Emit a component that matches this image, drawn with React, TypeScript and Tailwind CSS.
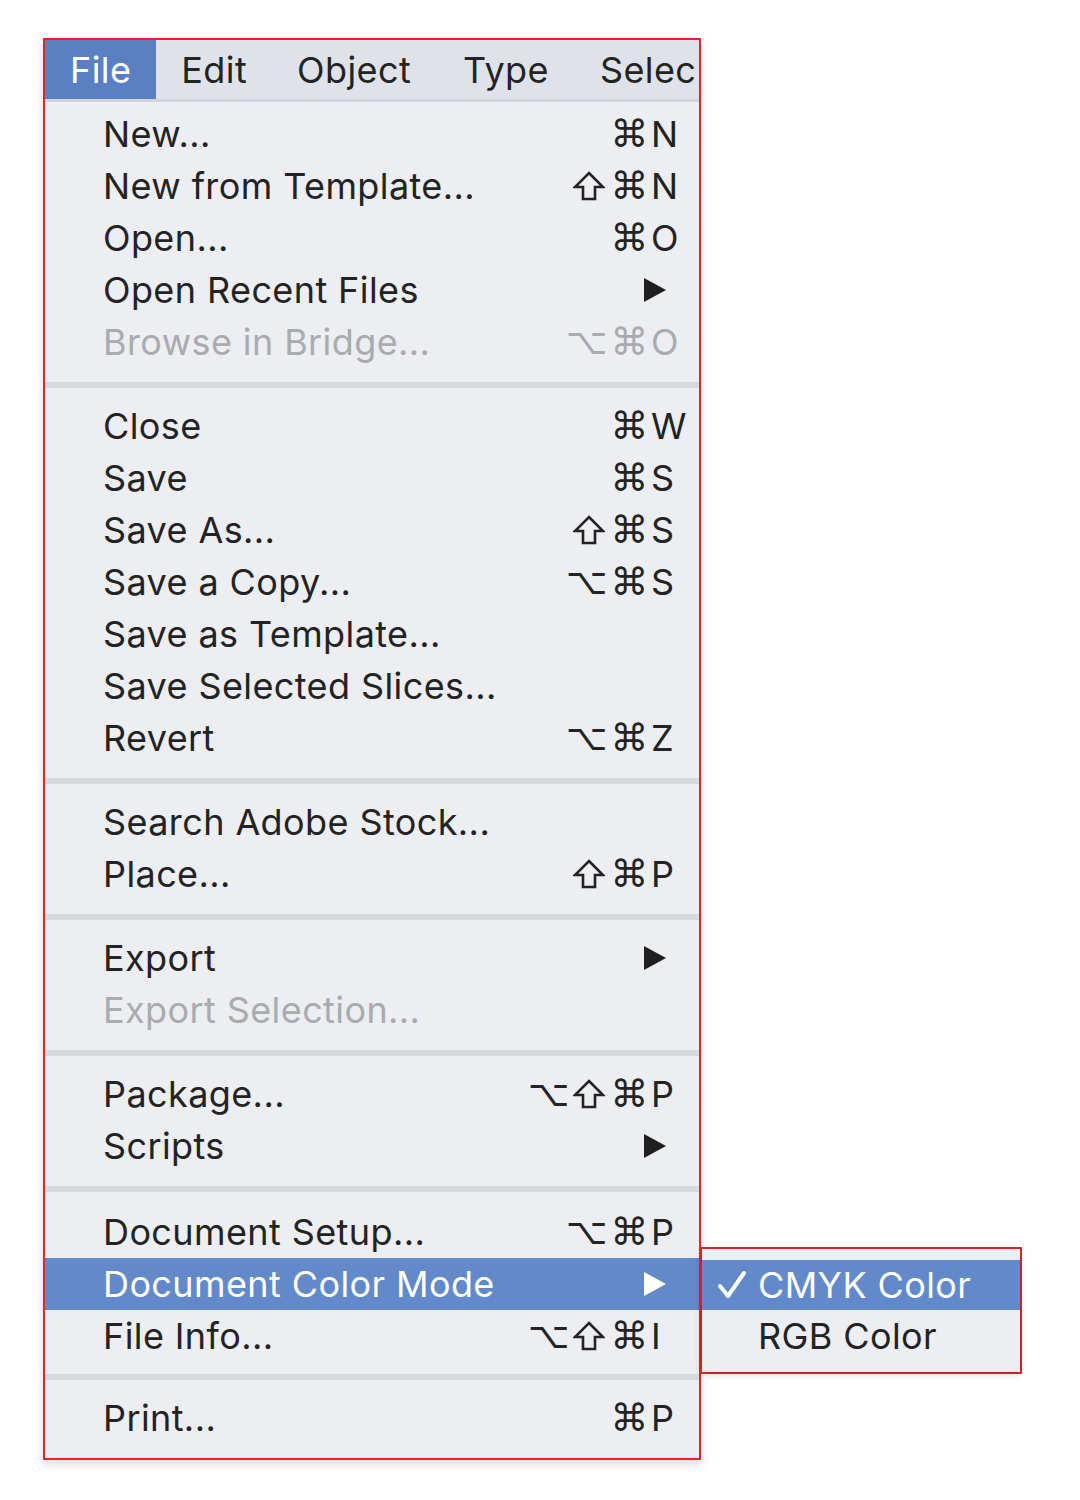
import type { FC } from "react";

type Item = {
  label: string;
  mods?: string;
  keyChar?: string;
  submenu?: boolean;
  disabled?: boolean;
  active?: boolean;
};

const groups: Item[][] = [
  [
    { label: "New...", mods: "⌘", keyChar: "N" },
    { label: "New from Template...", mods: "⇧⌘", keyChar: "N" },
    { label: "Open...", mods: "⌘", keyChar: "O" },
    { label: "Open Recent Files", submenu: true },
    { label: "Browse in Bridge...", mods: "⌥⌘", keyChar: "O", disabled: true },
  ],
  [
    { label: "Close", mods: "⌘", keyChar: "W" },
    { label: "Save", mods: "⌘", keyChar: "S" },
    { label: "Save As...", mods: "⇧⌘", keyChar: "S" },
    { label: "Save a Copy...", mods: "⌥⌘", keyChar: "S" },
    { label: "Save as Template..." },
    { label: "Save Selected Slices..." },
    { label: "Revert", mods: "⌥⌘", keyChar: "Z" },
  ],
  [
    { label: "Search Adobe Stock..." },
    { label: "Place...", mods: "⇧⌘", keyChar: "P" },
  ],
  [
    { label: "Export", submenu: true },
    { label: "Export Selection...", disabled: true },
  ],
  [
    { label: "Package...", mods: "⌥⇧⌘", keyChar: "P" },
    { label: "Scripts", submenu: true },
  ],
  [
    { label: "Document Setup...", mods: "⌥⌘", keyChar: "P" },
    { label: "Document Color Mode", submenu: true, active: true },
    { label: "File Info...", mods: "⌥⇧⌘", keyChar: "I" },
  ],
  [{ label: "Print...", mods: "⌘", keyChar: "P" }],
];

// vertical padding per group, tuned to the screenshot
const groupPad = [
  "pt-[6px] pb-[14px]",
  "pt-[12px] pb-[14px]",
  "pt-[12px] pb-[14px]",
  "pt-[12px] pb-[14px]",
  "pt-[12px] pb-[14px]",
  "pt-[14px] pb-[12px]",
  "pt-[12px] pb-[14px]",
];

const Arrow: FC<{ white?: boolean }> = ({ white }) => (
  <svg width="24" height="26" viewBox="0 0 24 26" className="mr-[32px]">
    <polygon points="1,1 23,13 1,25" fill={white ? "#ffffff" : "#1f1f1f"} />
  </svg>
);

// outline "shift" arrow as drawn in the mac menu
const Shift: FC = () => (
  <svg width="32" height="30" viewBox="0 0 32 30" className="mr-[6px]">
    <path
      d="M16 2 L30 16 L22 16 L22 28 L10 28 L10 16 L2 16 Z"
      fill="none"
      stroke="currentColor"
      strokeWidth="2.6"
      strokeLinejoin="miter"
    />
  </svg>
);

const Mods: FC<{ mods: string }> = ({ mods }) => (
  <span className="flex items-center font-['DejaVu_Sans',sans-serif] text-[38px] leading-none">
    {mods.split("").map((m, i) =>
      m === "⇧" ? (
        <Shift key={i} />
      ) : (
        <span key={i} className={m === "⌥" ? "mr-[3px] text-[36px]" : ""}>
          {m}
        </span>
      ),
    )}
  </span>
);

const Row: FC<{ item: Item }> = ({ item }) => {
  const color = item.active
    ? "text-white bg-[#6289c9]"
    : item.disabled
      ? "text-[#a9abaf]"
      : "text-[#232323]";
  return (
    <div className={`flex h-[52px] items-center pl-[58px] ${color}`}>
      <span className="flex-1 whitespace-nowrap">{item.label}</span>
      {item.submenu && <Arrow white={item.active} />}
      {item.mods && (
        <div className="flex items-center">
          <Mods mods={item.mods} />
          <span className="w-[50px] pl-[2px]">{item.keyChar}</span>
        </div>
      )}
    </div>
  );
};

export default function App() {
  return (
    <div className="min-h-[1500px] w-[1080px] bg-white pl-[43px] pt-[38px] font-['Inter',sans-serif] text-[36px] tracking-[0.4px]">
      <div className="relative w-[658px]">
        <div className="border-2 border-[#e3242b] shadow-[0_4px_10px_rgba(0,0,0,0.15)]">
          <div className="flex h-[62px] items-stretch overflow-hidden border-b-[3px] border-[#d1d4d9] bg-[#dfe3e9] text-[#232323]">
            <span className="flex items-center bg-[#5a80c3] px-[25px] text-white">File</span>
            <span className="flex items-center px-[25px]">Edit</span>
            <span className="flex items-center px-[25px]">Object</span>
            <span className="flex items-center px-[27px]">Type</span>
            <span className="flex items-center whitespace-nowrap pl-[24px]">Selec</span>
          </div>
          <div className="bg-[#eceef1]">
            {groups.map((g, i) => (
              <div key={i}>
                {i > 0 && <div className="h-[6px] bg-[#d8dadd]" />}
                <div className={groupPad[i]}>
                  {g.map((item) => (
                    <Row key={item.label} item={item} />
                  ))}
                </div>
              </div>
            ))}
          </div>
        </div>

        <div className="absolute left-[657px] top-[1209px] w-[322px] border-2 border-[#e3242b] bg-white">
          <div className="rounded-[8px] bg-[#eceef1] pt-[11px] pb-[10px] shadow-[0_2px_8px_rgba(0,0,0,0.2)]">
            <div className="flex h-[50px] items-center bg-[#6289c9] text-white">
              <span className="flex w-[56px] justify-center pl-[4px]">
                <svg width="30" height="30" viewBox="0 0 30 30">
                  <path
                    d="M3 16 L11 26 L27 3"
                    fill="none"
                    stroke="#ffffff"
                    strokeWidth="4"
                    strokeLinecap="round"
                    strokeLinejoin="round"
                  />
                </svg>
              </span>
              <span>CMYK Color</span>
            </div>
            <div className="flex h-[52px] items-center pl-[56px] text-[#232323]">RGB Color</div>
          </div>
        </div>
      </div>
    </div>
  );
}
